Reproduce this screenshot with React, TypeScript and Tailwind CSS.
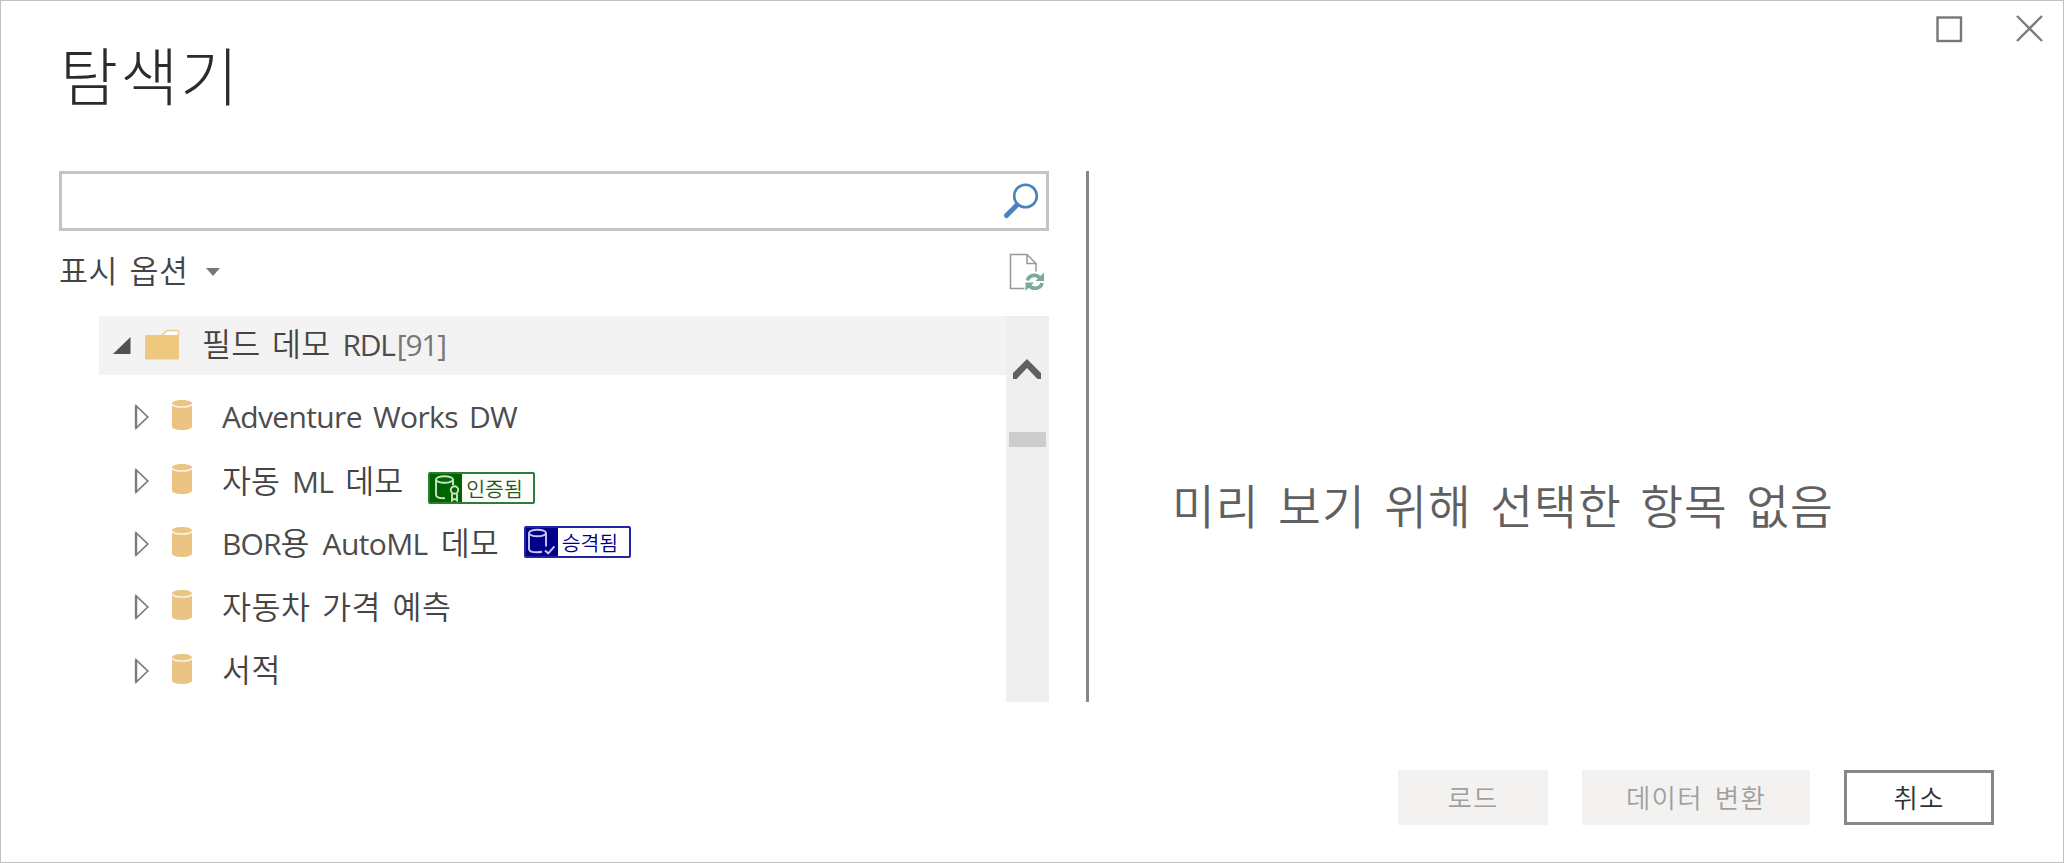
import type { ReactNode } from "react";

function Expander() {
  return (
    <svg className="h-[26px] w-4 shrink-0" viewBox="0 0 16 26" fill="none">
      <path d="M2.200 2v22L13.800 13z" stroke="#7c7c7c" strokeWidth="1.700" />
      <path d="M2 1.500v23" stroke="#7c7c7c" strokeWidth="2.400" />
    </svg>
  );
}

function Cylinder() {
  return (
    <svg className="h-[30px] w-5 shrink-0" viewBox="0 0 20 30">
      <path d="M0 3.500C0 1.500 4.500 0 10 0s10 1.500 10 3.500V26.500c0 2-4.500 3.500-10 3.500S0 28.500 0 26.500z" fill="#ebc383" />
      <path d="M0 4.200c1 2 5 2.900 10 2.900s9-.9 10-2.900" fill="none" stroke="#fdf3e2" strokeWidth="1.500" />
    </svg>
  );
}

function CertifiedIcon() {
  return (
    <svg className="h-[30px] w-8" viewBox="0 0 32 30" fill="none" stroke="#c8e6c4" strokeWidth="1.900">
      <ellipse cx="15.500" cy="6.500" rx="8.500" ry="3.300" />
      <path d="M7 6.500v15.500c0 2 3 3.300 9 3.300M24 6.500v5.500" />
      <circle cx="25.500" cy="17" r="3.700" />
      <path d="M23 20.500v7l2.500-1.700 2.500 1.700v-7" />
    </svg>
  );
}

function PromotedIcon() {
  return (
    <svg className="h-[30px] w-8" viewBox="0 0 32 30" fill="none" stroke="#c9c9f6" strokeWidth="1.900">
      <ellipse cx="12.500" cy="6" rx="8.500" ry="3.300" />
      <path d="M4 6v16c0 2 3 3.300 8 3.300 2 0 3.500-.2 5-.5M21 6v13.500" />
      <path d="M20 23.500l3.200 2.800 6.300-7" />
    </svg>
  );
}

function Badge({ tone, icon, children }: { tone: "green" | "blue"; icon: ReactNode; children: string }) {
  const frame = tone === "green" ? "border-[#2f7d32] bg-[#fefffa]" : "border-[#2323a8] bg-white";
  const block = tone === "green" ? "bg-[#006400]" : "bg-[#00008b]";
  const label = tone === "green" ? "text-[#24591c]" : "text-[#00008b]";
  return (
    <span className={`flex h-8 w-[107px] shrink-0 overflow-hidden rounded-[2px] border-2 ${frame}`}>
      <span className={`-m-px flex w-[33px] shrink-0 ${block}`}>{icon}</span>
      <span className={`ml-[5px] text-[20.500px] leading-[28px] ${label}`}>{children}</span>
    </span>
  );
}

function Item({ height, children, badge }: { height: string; children: ReactNode; badge?: ReactNode }) {
  return (
    <li className={`flex items-center pl-[35px] ${height}`}>
      <Expander />
      <span className="mb-1 ml-[22px] flex">
        <Cylinder />
      </span>
      <span className="ml-[30px] flex items-center">{children}</span>
      {badge}
    </li>
  );
}

export default function App() {
  return (
    <main className="flex h-[863px] w-[2064px] flex-col overflow-hidden border border-[#c1c1c1] bg-white font-['Noto_Sans_CJK_KR',sans-serif] font-[350] whitespace-nowrap text-[#444]">
      <header className="flex h-[170px] justify-between pl-[59px]">
        <h1 className="mt-[27px] text-[63px] leading-[90px] font-light tracking-[2.200px] text-[#2b2b2b]">탐색기</h1>
        <div className="flex gap-[50px] pt-[13px] pr-[19px]">
          <svg className="h-[30px] w-[30px]" viewBox="0 0 30 30" fill="none">
            <rect x="3.500" y="3.500" width="23.500" height="23.500" stroke="#777" strokeWidth="2.400" />
          </svg>
          <svg className="h-[30px] w-[30px]" viewBox="0 0 30 30" fill="none">
            <path d="M3 2l25 25M28 2L3 27" stroke="#7c7c7c" strokeWidth="2.400" />
          </svg>
        </div>
      </header>

      <div className="flex h-[531px] pl-[58px]">
        <section className="flex w-[990px] flex-col">
          <div className="flex h-[60px] items-center justify-end border-[3px] border-[#c4c4c4]">
            <svg className="mr-1 h-10 w-10" viewBox="0 0 40 40" fill="none">
              <path d="M4.500 34.500L16 23" stroke="#4a82bd" strokeWidth="5" strokeLinecap="round" />
              <circle cx="23.500" cy="15" r="11.300" fill="#fff" stroke="#4a82bd" strokeWidth="2.600" />
            </svg>
          </div>
          <div className="flex h-[85px] items-center pb-1">
            <span className="-mt-1.5 text-[31.500px] leading-[48px] tracking-[0.500px] [word-spacing:4px]">표시 옵션</span>
            <svg className="ml-[18px] h-2 w-[14px]" viewBox="0 0 14 8">
              <path d="M0 0h14L7 8z" fill="#777" />
            </svg>
            <svg className="mr-[5px] ml-auto h-10 w-9" viewBox="0 0 36 40" fill="none">
              <path d="M16.500 36.500H2.500V2.500H19l9 9v8M19 2.500v9h9" stroke="#999" strokeWidth="1.500" />
              <g stroke="#78ab98" strokeWidth="3.600">
                <path d="M19.500 28.500c1-5 8.500-7.500 13-2" />
                <path d="M34 31c-1 5.500-9 7.500-13.500 2" />
              </g>
              <path d="M36 20.500v8.500h-8.500zM17.500 39v-8.500H26z" fill="#78ab98" />
            </svg>
          </div>
          <div className="flex h-[386px] pl-10">
            <ul className="flex-1">
              <li className="mb-[10px] flex h-[59px] items-center bg-[#f3f3f3] pb-[2px] pl-[13px]">
                <svg className="mt-px h-[19px] w-[19px]" viewBox="0 0 19 19">
                  <path d="M1 18H18.500V1z" fill="#505050" />
                </svg>
                <svg className="mb-px ml-[13px] h-[31px] w-9" viewBox="0 0 36 31">
                  <path d="M19 5.500L23 1.500h10q1.500 0 1.500 1.500v5H16z" fill="#fff" stroke="#f0cb85" strokeWidth="1.400" />
                  <path d="M2 6h33v23.500q0 1-1 1H2q-1 0-1-1V7q0-1 1-1z" fill="#efc880" />
                </svg>
                <span className="-mt-0.5 ml-[22px] flex items-baseline leading-[48px]">
                  <span className="text-[31.500px] tracking-[0.300px] [word-spacing:4px]">필드 데모</span>
                  <span className="ml-3 font-['Open_Sans',sans-serif] text-[30px] font-normal tracking-[-1.200px] text-[#4c4c4c]">RDL</span>
                  <span className="ml-[2px] font-['Open_Sans',sans-serif] text-[30px] font-normal tracking-[-1.200px] text-[#777]">[91]</span>
                </span>
              </li>
              <Item height="h-16">
                <span className="font-['Open_Sans',sans-serif] text-[30px] leading-[48px] font-normal tracking-[-0.650px] text-[#4c4c4c] [word-spacing:4px]">Adventure Works DW</span>
              </Item>
              <Item
                height="h-16"
                badge={<span className="mt-[13px] ml-[25px]"><Badge tone="green" icon={<CertifiedIcon />}>인증됨</Badge></span>}
              >
                <span className="mb-0.5 flex items-baseline leading-[48px]">
                  <span className="text-[31.500px]">자동</span>
                  <span className="ml-3 font-['Open_Sans',sans-serif] text-[30px] font-normal tracking-[-0.700px] text-[#4c4c4c]">ML</span>
                  <span className="ml-3 text-[31.500px]">데모</span>
                </span>
              </Item>
              <Item
                height="h-[62px]"
                badge={<span className="mb-[5px] ml-[25px]"><Badge tone="blue" icon={<PromotedIcon />}>승격됨</Badge></span>}
              >
                <span className="mb-1 flex items-baseline leading-[48px]">
                  <span className="font-['Open_Sans',sans-serif] text-[30px] font-normal tracking-[-0.900px] text-[#4c4c4c]">BOR</span>
                  <span className="text-[31.500px]">용</span>
                  <span className="ml-[13px] font-['Open_Sans',sans-serif] text-[30px] font-normal tracking-[-0.600px] text-[#4c4c4c]">AutoML</span>
                  <span className="ml-[13px] text-[31.500px]">데모</span>
                </span>
              </Item>
              <Item height="h-16">
                <span className="mb-1 text-[31.500px] leading-[48px] tracking-[0.500px] [word-spacing:4px]">자동차 가격 예측</span>
              </Item>
              <Item height="h-[63px]">
                <span className="mb-1.5 text-[31.500px] leading-[48px] tracking-[0.500px]">서적</span>
              </Item>
            </ul>
            <div className="flex w-[43px] flex-col items-center bg-[#efefef]">
              <svg className="mt-[43px] mr-px h-5 w-7" viewBox="0 0 28 20">
                <path d="M0 14L14 0l14 14v6h-3.500L14 9 3.500 20H0z" fill="#606060" />
              </svg>
              <div className="mt-[53px] h-[15px] w-[37px] bg-[#cdcdcd]" />
            </div>
          </div>
        </section>
        <div className="ml-[37px] w-[3px] bg-[#868686]" />
        <section className="flex flex-1 pl-[83px]">
          <p className="mt-[298px] text-[46.500px] leading-[70px] tracking-[1.050px] text-[#606060] [word-spacing:7px]">
            미리 보기 위해 선택한 항목 없음
          </p>
        </section>
      </div>

      <footer className="mt-[68px] flex h-[55px] justify-end gap-[34px] pr-[69px] text-[26.500px] leading-[51px] tracking-[1.200px]">
        <button className="w-[150px] bg-[#f3f2f1] pb-0.5 text-[#a19f9d]">로드</button>
        <button className="w-[228px] bg-[#f3f2f1] pb-0.5 text-[#a19f9d] [word-spacing:5px]">데이터 변환</button>
        <button className="w-[150px] border-[3px] border-[#868686] pb-0.5 leading-[47px] text-[#323130]">취소</button>
      </footer>
    </main>
  );
}
